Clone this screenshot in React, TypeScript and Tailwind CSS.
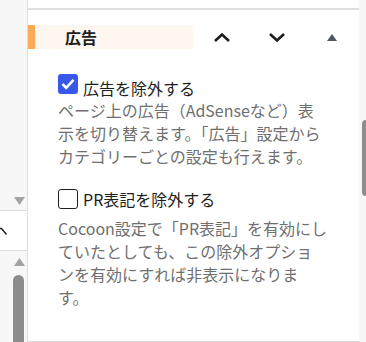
import React from "react";

const font = "font-['Noto_Sans_CJK_JP','Noto_Sans',sans-serif]";

function ChevronUp() {
  return (
    <svg width="18" height="11" viewBox="0 0 18 11" fill="none">
      <polyline points="2,9 9,2.5 16,9" stroke="#1e1e1e" strokeWidth="2.6" strokeLinejoin="miter" />
    </svg>
  );
}
function ChevronDown() {
  return (
    <svg width="18" height="11" viewBox="0 0 18 11" fill="none">
      <polyline points="2,2 9,8.5 16,2" stroke="#1e1e1e" strokeWidth="2.6" strokeLinejoin="miter" />
    </svg>
  );
}

export default function App() {
  return (
    <div className={`w-[366px] h-[342px] flex overflow-hidden bg-white ${font}`}>
      {/* left column */}
      <div className="w-[27px] flex flex-col shrink-0">
        <div className="h-[210px] bg-[#f7f7f7] flex flex-col justify-end items-start pl-[14px] pb-[5px]">
          <svg width="11" height="8" viewBox="0 0 11 8">
            <polygon points="0,0 11,0 5.5,8" fill="#a3a3a3" />
          </svg>
        </div>
        <div className="h-[41px] border-t border-b border-[#dcdcdc] bg-white flex items-center">
          <svg width="8" height="9" viewBox="0 0 8 9" className="mt-[2px]">
            <path d="M0 1.5 L1.5 1.5 L6.5 7.5" stroke="#1e1e1e" strokeWidth="1.4" fill="none" />
          </svg>
        </div>
        <div className="flex-1 bg-[#f7f7f7] flex flex-col items-start pl-[13px] pt-[7px]">
          <svg width="11" height="8" viewBox="0 0 11 8" className="ml-[1px]">
            <polygon points="0,8 11,8 5.5,0" fill="#a3a3a3" />
          </svg>
          <div className="mt-[9px] w-[11px] flex-1 rounded-t-full bg-[#8c8c8c]" />
        </div>
      </div>

      {/* main panel */}
      <div className="w-[332px] shrink-0 border-l border-[#dcdcdc] flex flex-col bg-white">
        <div className="h-[10px] border-b-2 border-[#dedede] shrink-0" />
        <div className="mt-[15px] h-[24px] flex items-center shrink-0">
          <div className="w-[7px] h-full bg-[#fcaa58]" />
          <div className="w-[158px] h-full bg-[#fdf7f0] flex items-center pl-[30px]">
            <span className="text-[16px] font-bold text-[#1e1e1e] leading-none">広告</span>
          </div>
          <div className="ml-[20px] w-[18px] flex justify-center">
            <ChevronUp />
          </div>
          <div className="ml-[37px] w-[18px] flex justify-center">
            <ChevronDown />
          </div>
          <div className="ml-[41px] flex">
            <svg width="10" height="7" viewBox="0 0 10 7">
              <polygon points="0,7 10,7 5,0" fill="#50575e" />
            </svg>
          </div>
        </div>

        <div className="flex-1 pl-[30px] pt-[28px] w-[302px]">
          <div className="flex items-start h-[22px]">
            <div className="mt-[-3px] w-[20px] h-[20px] rounded-[3px] bg-[#3858e9] flex items-center justify-center shrink-0">
              <svg width="14" height="12" viewBox="0 0 14 12" fill="none">
                <polyline points="1.5,6 5.2,9.8 12.5,1.8" stroke="white" strokeWidth="2.6" />
              </svg>
            </div>
            <span className="ml-[5px] text-[16px] leading-[22px] text-[#1e1e1e]">広告を除外する</span>
          </div>
          <p className="w-[270px] text-[16px] leading-[23px] text-[#6f6f6f]">
            ページ上の広告（AdSenseなど）表示を切り替えます。「広告」設定からカテゴリーごとの設定も行えます。
          </p>

          <div className="flex items-start h-[22px] mt-[20px]">
            <div className="mt-[1px] w-[20px] h-[20px] rounded-[3px] border border-[#1e1e1e] bg-white shrink-0" />
            <span className="ml-[5px] text-[16px] leading-[22px] text-[#1e1e1e]">PR表記を除外する</span>
          </div>
          <p className="w-[270px] text-[16px] leading-[23px] text-[#6f6f6f] mt-[7px]">
            Cocoon設定で「PR表記」を有効にしていたとしても、この除外オプションを有効にすれば非表示になります。
          </p>
        </div>
        <div className="h-[1px] bg-[#dcdcdc] shrink-0" />
      </div>

      {/* right strip */}
      <div className="flex-1 bg-[#f6f6f6] flex flex-col items-end pt-[120px]">
        <div className="w-[4px] h-[76px] rounded-l-full bg-[#8c8c8c]" />
      </div>
    </div>
  );
}
